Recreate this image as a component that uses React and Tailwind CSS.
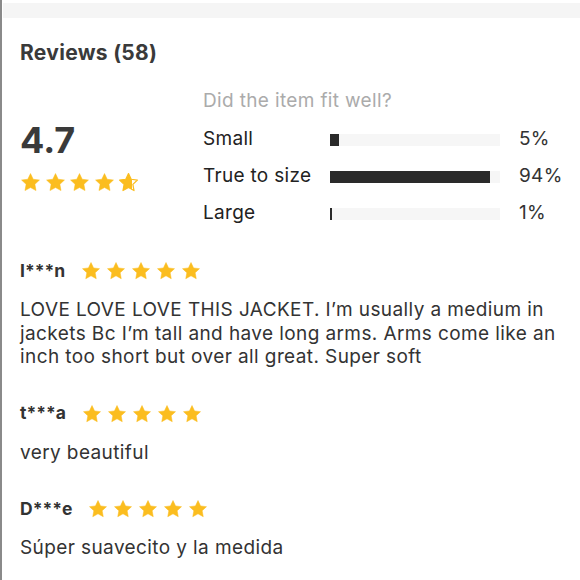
import React from "react";

const STAR_PATH =
  "M12 1.8l3.1 6.5 7.1.9-5.2 4.9 1.3 7.1L12 17.8l-6.3 3.4 1.3-7.1L1.8 9.2l7.1-.9z";

const Star = ({ size = 20, fill = 1, id }) => (
  <svg width={size} height={size} viewBox="0 0 24 24" className="shrink-0">
    {fill < 1 && (
      <defs>
        <linearGradient id={id} x1="0" x2="1" y1="0" y2="0">
          <stop offset={fill} stopColor="#fbbd1f" />
          <stop offset={fill} stopColor="#ffffff" />
        </linearGradient>
      </defs>
    )}
    <path
      d={STAR_PATH}
      fill={fill < 1 ? `url(#${id})` : "#fbbd1f"}
      stroke="#fbbd1f"
      strokeWidth={fill < 1 ? 1.4 : 0.6}
      strokeLinejoin="round"
    />
  </svg>
);

const Stars = ({ size, gap, rating = 5, prefix }) => (
  <div className={`flex items-center ${gap}`}>
    {[0, 1, 2, 3, 4].map((i) => (
      <Star
        key={i}
        size={size}
        fill={Math.max(0, Math.min(1, rating - i))}
        id={`${prefix}-${i}`}
      />
    ))}
  </div>
);

const fit = [
  { label: "Small", pct: 5 },
  { label: "True to size", pct: 94 },
  { label: "Large", pct: 1 },
];

const reviews = [
  {
    name: "I***n",
    text: "LOVE LOVE LOVE THIS JACKET. I\u2019m usually a medium in jackets Bc I\u2019m tall and have long arms. Arms come like an inch too short but over all great. Super soft",
  },
  { name: "t***a", text: "very beautiful" },
  { name: "D***e", text: "S\u00faper suavecito y la medida" },
];

export default function App() {
  return (
    <div
      className="w-[580px] h-[580px] overflow-hidden bg-white border-l-2 border-[#8a8a8a] text-[#333]"
      style={{ fontFamily: "Inter, 'Noto Sans', sans-serif" }}
    >
      <div className="h-[15px] mt-[3px] ml-[1px] bg-[#f5f5f5]" />

      <div className="px-[18px]">
        <h2 className="mt-[23px] text-[21px] leading-[24px] font-bold tracking-[0.3px] text-[#3a3a3a]">
          Reviews (58)
        </h2>

        {/* summary */}
        <div className="flex mt-[24px]">
          <div className="w-[183px] shrink-0">
            <div className="mt-[31px] text-[36px] leading-[40px] font-bold text-[#3a3a3a]">
              4.7
            </div>
            <div className="mt-[12px]">
              <Stars size={21} gap="gap-[3.5px]" rating={4.7} prefix="sum" />
            </div>
          </div>

          <div className="flex-1">
            <div className="text-[19px] leading-[24px] tracking-[0.35px] text-[#ababab]">
              Did the item fit well?
            </div>
            <div className="mt-[8px]">
              {fit.map((f) => (
                <div
                  key={f.label}
                  className="flex items-center h-[37px] text-[19px] tracking-[0.3px] text-[#222]"
                >
                  <span className="w-[127px] shrink-0">{f.label}</span>
                  <div className="w-[170px] h-[12px] bg-[#f6f6f6] shrink-0">
                    <div
                      className="h-full bg-[#2a2a2a]"
                      style={{ width: `${Math.max(f.pct, 1.2)}%` }}
                    />
                  </div>
                  <span className="ml-[19px] text-[#333]">{f.pct}%</span>
                </div>
              ))}
            </div>
          </div>
        </div>

        {/* reviews */}
        <div className="mt-[27px]">
          {reviews.map((r, i) => (
            <div key={r.name} className={i === 0 ? "" : "mt-[33px]"}>
              <div className="flex items-center h-[24px] gap-[16px]">
                <span className="text-[17.5px] font-bold text-[#333]">{r.name}</span>
                <Stars size={20} gap="gap-[5px]" prefix={`r${i}`} />
              </div>
              <p className="mt-[15px] text-[19px] leading-[23.5px] tracking-[0.4px] text-[#333]">
                {r.text}
              </p>
            </div>
          ))}
        </div>
      </div>
    </div>
  );
}
